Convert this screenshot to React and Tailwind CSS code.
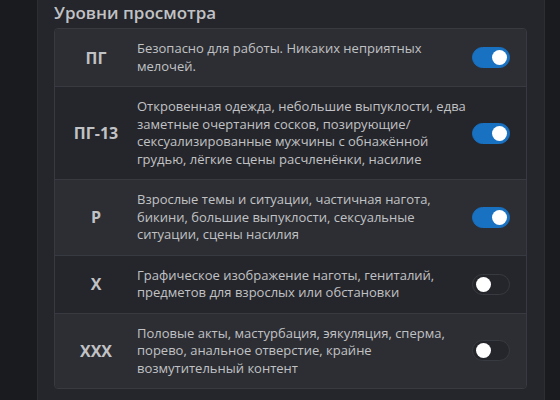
import React, { useState } from 'react';

const levels = [
  { id: 'pg', label: 'ПГ', text: 'Безопасно для работы. Никаких неприятных мелочей.', on: true },
  {
    id: 'pg13',
    label: 'ПГ-13',
    text: 'Откровенная одежда, небольшие выпуклости, едва заметные очертания сосков, позирующие/ сексуализированные мужчины с обнажённой грудью, лёгкие сцены расчленёнки, насилие',
    on: true,
  },
  {
    id: 'r',
    label: 'Р',
    text: 'Взрослые темы и ситуации, частичная нагота, бикини, большие выпуклости, сексуальные ситуации, сцены насилия',
    on: true,
  },
  { id: 'x', label: 'X', text: 'Графическое изображение наготы, гениталий, предметов для взрослых или обстановки', on: false },
  {
    id: 'xxx',
    label: 'XXX',
    text: 'Половые акты, мастурбация, эякуляция, сперма, порево, анальное отверстие, крайне возмутительный контент',
    on: false,
  },
];

const Toggle = ({ checked, onChange }) => (
  <button
    type="button"
    onClick={onChange}
    className={`relative h-[21px] w-[38px] shrink-0 rounded-full border ${
      checked ? 'border-[#1971c2] bg-[#1971c2]' : 'border-[#373a40] bg-[#25262b]'
    }`}
  >
    <span
      className={`absolute top-[2px] h-[15px] w-[15px] rounded-full bg-white ${
        checked ? 'left-[19px]' : 'left-[3px]'
      }`}
    />
  </button>
);

export default function App() {
  const [state, setState] = useState(() => Object.fromEntries(levels.map((l) => [l.id, l.on])));

  return (
    <div
      className="flex h-[400px] w-[560px] overflow-hidden bg-[#1a1b1e] text-[#c1c2c5]"
      style={{ fontFamily: '"Open Sans", "Noto Sans", sans-serif' }}
    >
      <div className="w-[37px] shrink-0" />
      <div className="w-[508px] shrink-0 border-x border-[#2c2e33] bg-[#25262b] pl-[16px] pr-[17px]">
        <h2 className="pt-[1px] text-[17px] font-semibold leading-[24px]">Уровни просмотра</h2>
        <div className="mt-[3px] overflow-hidden rounded-[4px] border border-[#373a40]">
          {levels.map((l, i) => (
            <div
              key={l.id}
              className={`flex items-center py-[11px] pr-[16px] ${i > 0 ? 'border-t border-[#373a40]' : ''} ${
                i % 2 === 0 ? 'bg-[#2c2e33]' : 'bg-[#25262b]'
              }`}
            >
              <div className="w-[82px] shrink-0 text-center text-[16px] font-bold">{l.label}</div>
              <p className="w-[334px] shrink-0 text-[13px] leading-[17.5px]">{l.text}</p>
              <div className="flex flex-1 justify-end">
                <Toggle checked={state[l.id]} onChange={() => setState((s) => ({ ...s, [l.id]: !s[l.id] }))} />
              </div>
            </div>
          ))}
        </div>
      </div>
    </div>
  );
}
